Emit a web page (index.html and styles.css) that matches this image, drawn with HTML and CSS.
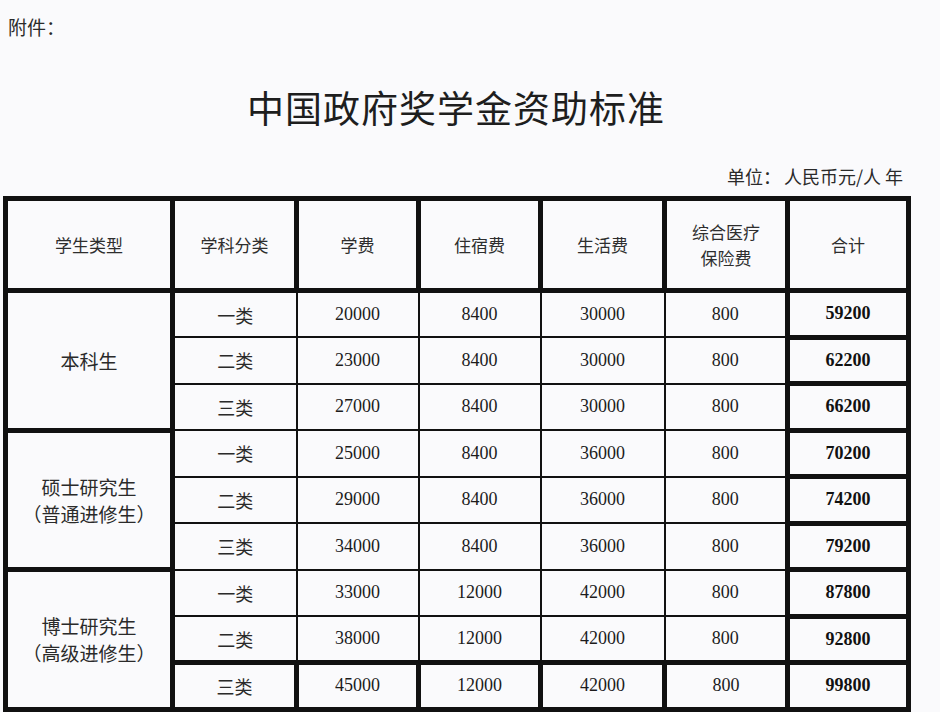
FILE: index.html
```html
<!DOCTYPE html>
<html lang="zh-CN">
<head>
<meta charset="utf-8">
<title>中国政府奖学金资助标准</title>
<link rel="stylesheet" href="styles.css">
</head>
<body>
<div class="page">
  <div class="annex">附件：</div>
  <h1 class="title">中国政府奖学金资助标准</h1>
  <div class="unit">单位：<span class="unit-val">人民币元/人 年</span></div>
  <table class="grid">
    <colgroup>
      <col class="c1"><col class="c2"><col class="c3"><col class="c4"><col class="c5"><col class="c6"><col class="c7">
    </colgroup>
    <thead>
      <tr class="head">
        <th>学生类型</th>
        <th>学科分类</th>
        <th>学费</th>
        <th>住宿费</th>
        <th>生活费</th>
        <th>综合医疗<br>保险费</th>
        <th>合计</th>
      </tr>
    </thead>
    <tbody>
      <tr>
        <td class="grp" rowspan="3">本科生</td>
        <td class="cat">一类</td><td class="num">20000</td><td class="num">8400</td><td class="num">30000</td><td class="num">800</td><td class="tot">59200</td>
      </tr>
      <tr>
        <td class="cat">二类</td><td class="num">23000</td><td class="num">8400</td><td class="num">30000</td><td class="num">800</td><td class="tot">62200</td>
      </tr>
      <tr>
        <td class="cat">三类</td><td class="num">27000</td><td class="num">8400</td><td class="num">30000</td><td class="num">800</td><td class="tot">66200</td>
      </tr>
      <tr>
        <td class="grp" rowspan="3">硕士研究生<br>（普通进修生）</td>
        <td class="cat">一类</td><td class="num">25000</td><td class="num">8400</td><td class="num">36000</td><td class="num">800</td><td class="tot">70200</td>
      </tr>
      <tr>
        <td class="cat">二类</td><td class="num">29000</td><td class="num">8400</td><td class="num">36000</td><td class="num">800</td><td class="tot">74200</td>
      </tr>
      <tr>
        <td class="cat">三类</td><td class="num">34000</td><td class="num">8400</td><td class="num">36000</td><td class="num">800</td><td class="tot">79200</td>
      </tr>
      <tr>
        <td class="grp" rowspan="3">博士研究生<br>（高级进修生）</td>
        <td class="cat">一类</td><td class="num">33000</td><td class="num">12000</td><td class="num">42000</td><td class="num">800</td><td class="tot">87800</td>
      </tr>
      <tr>
        <td class="cat">二类</td><td class="num">38000</td><td class="num">12000</td><td class="num">42000</td><td class="num">800</td><td class="tot">92800</td>
      </tr>
      <tr class="last">
        <td class="cat">三类</td><td class="num">45000</td><td class="num">12000</td><td class="num">42000</td><td class="num">800</td><td class="tot">99800</td>
      </tr>
    </tbody>
  </table>
</div>
</body>
</html>
```

FILE: styles.css
```css
html, body {
  margin: 0;
  padding: 0;
  background: #fafafc;
}

body {
  font-family: "Noto Sans CJK SC", "Noto Sans", sans-serif;
  color: #2a2a2a;
}

.page {
  width: 906px;
  margin-left: 3px;
  padding-top: 15px;
}

.annex {
  margin-left: 5px;
  font-size: 19px;
  line-height: 24px;
}

.title {
  margin: 46px 0 0 0;
  font-size: 37px;
  line-height: 44px;
  font-weight: normal;
  letter-spacing: 1px;
  text-align: center;
  color: #1e1e1e;
}

.unit {
  margin-top: 36px;
  padding-right: 6px;
  font-size: 18px;
  line-height: 22px;
  text-align: right;
}

.unit-val {
  margin-left: 3px;
}

.grid {
  margin-top: 9px;
  border-collapse: collapse;
  table-layout: fixed;
  width: 906px;
  border: 4px solid #111;
}

.c1 { width: 167px; }
.c2 { width: 124px; }
.c3 { width: 122px; }
.c4 { width: 122px; }
.c5 { width: 124px; }
.c6 { width: 123px; }
.c7 { width: 121px; }

.grid th,
.grid td {
  padding: 0;
  text-align: center;
  vertical-align: middle;
  border: 2px solid #111;
}

.head {
  height: 92px;
}

.grid th {
  border-width: 5px;
  font-size: 17px;
  line-height: 26px;
  font-weight: normal;
  color: #2e2e2e;
}

.grid tbody tr {
  height: 46.5px;
}

.grid td.grp {
  border-width: 5px;
  font-size: 19px;
  line-height: 27px;
  color: #2a2a2a;
}

.grid td.cat {
  font-size: 18px;
  color: #2a2a2a;
}

.grid td.num,
.grid td.tot {
  font-family: "Liberation Serif", "Times New Roman", serif;
  font-size: 18px;
  color: #1c1c1c;
}

.grid td.tot {
  border-width: 5px;
  font-weight: bold;
  color: #111;
}

.grid tr.last td {
  border-width: 5px;
}
```
